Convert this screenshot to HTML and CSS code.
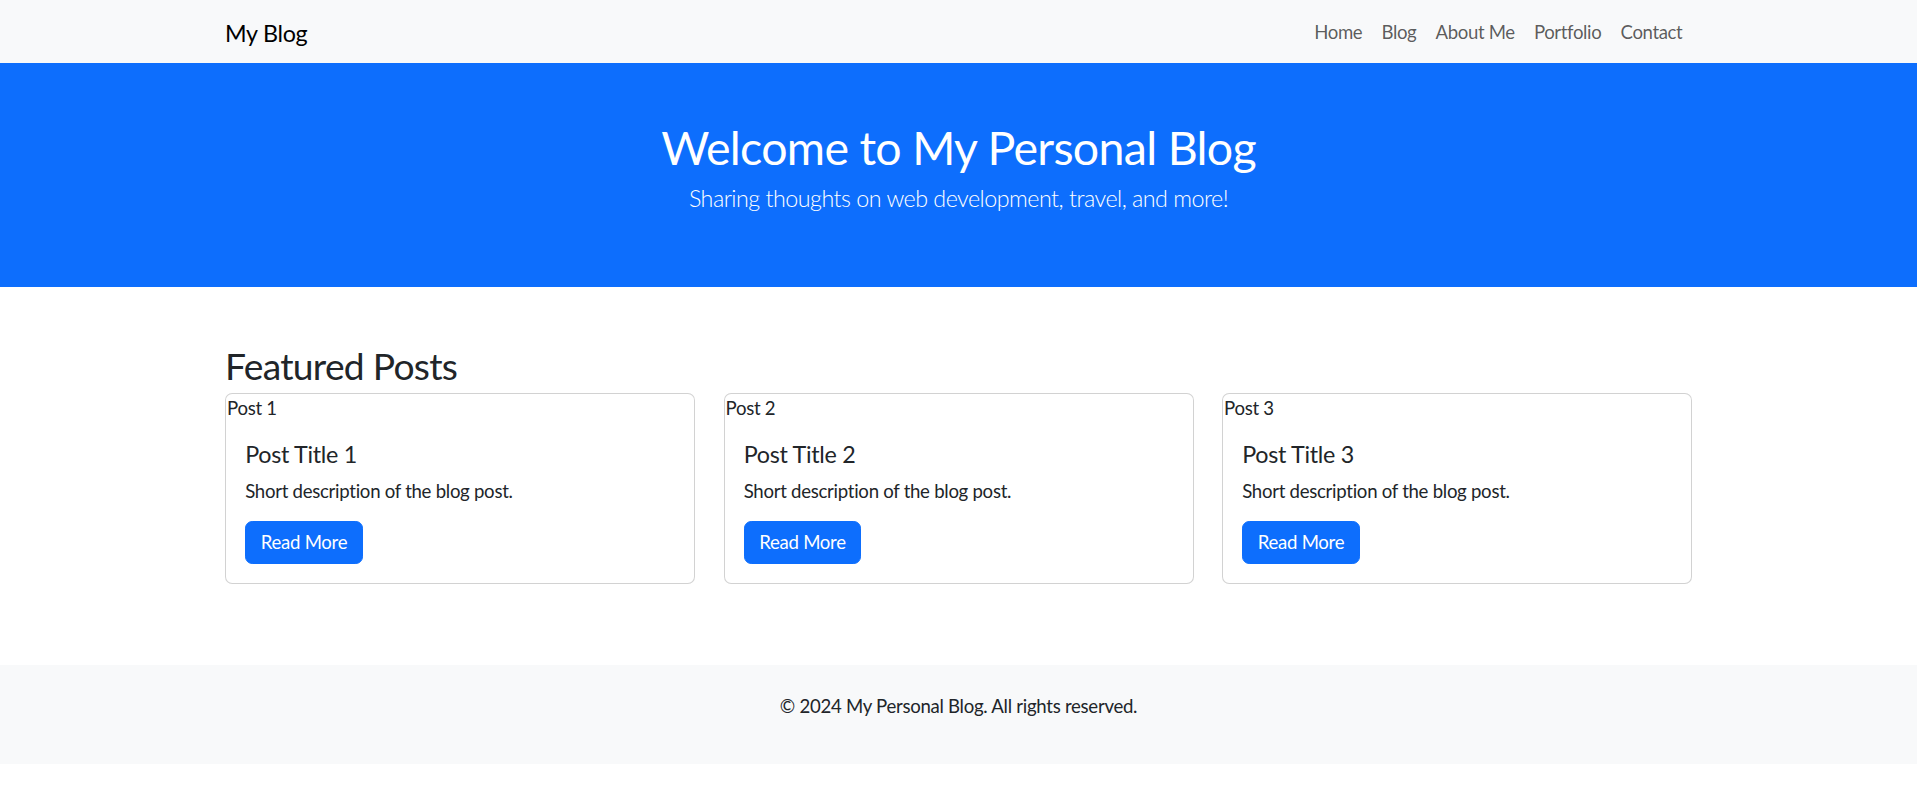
FILE: index.html
```html
<!DOCTYPE html>
<html lang="en">
<head>
<meta charset="utf-8">
<title>My Personal Blog</title>
<link rel="stylesheet" href="styles.css">
</head>
<body>
<nav class="navbar">
  <div class="container nav-inner">
    <a class="brand" href="#">My Blog</a>
    <ul class="nav-links">
      <li><a href="#">Home</a></li>
      <li><a href="#">Blog</a></li>
      <li><a href="#">About Me</a></li>
      <li><a href="#">Portfolio</a></li>
      <li><a href="#">Contact</a></li>
    </ul>
  </div>
</nav>

<header class="hero">
  <h1 class="hero-title">Welcome to My Personal Blog</h1>
  <p class="hero-lead">Sharing thoughts on web development, travel, and more!</p>
</header>

<main class="posts">
  <div class="container">
    <h2 class="section-title">Featured Posts</h2>
    <div class="card-grid">
      <div class="card">
        <div class="card-img">Post 1</div>
        <div class="card-body">
          <h5 class="card-title">Post Title 1</h5>
          <p class="card-text">Short description of the blog post.</p>
          <a href="#" class="btn">Read More</a>
        </div>
      </div>
      <div class="card">
        <div class="card-img">Post 2</div>
        <div class="card-body">
          <h5 class="card-title">Post Title 2</h5>
          <p class="card-text">Short description of the blog post.</p>
          <a href="#" class="btn">Read More</a>
        </div>
      </div>
      <div class="card">
        <div class="card-img">Post 3</div>
        <div class="card-body">
          <h5 class="card-title">Post Title 3</h5>
          <p class="card-text">Short description of the blog post.</p>
          <a href="#" class="btn">Read More</a>
        </div>
      </div>
    </div>
  </div>
</main>

<footer class="footer">
  <p class="footer-text">&copy; 2024 My Personal Blog. All rights reserved.</p>
</footer>
</body>
</html>
```

FILE: styles.css
```css
* { box-sizing: border-box; }
html { font-size: 18.6px; }
body {
  margin: 0;
  font-family: Lato, "Open Sans", sans-serif;
  font-size: 18.6px;
  line-height: 1.5;
  letter-spacing: -0.015em;
  color: #212529;
  background: #fff;
}
a { text-decoration: none; }
h1, h2, h5, p { margin: 0; }

.container {
  width: 1467px;
  margin: 0 auto;
}

/* Navbar */
.navbar {
  background: #f8f9fa;
  height: 63px;
  padding-top: 2.5px;
  display: flex;
  align-items: center;
}
.nav-inner {
  display: flex;
  align-items: center;
  justify-content: space-between;
}
.brand {
  font-size: 23.3px;
  line-height: 36px;
  padding: 5px 0;
  color: #000;
}
.nav-links {
  list-style: none;
  margin: 0;
  padding: 0;
  display: flex;
}
.nav-links a {
  display: block;
  padding: 9.6px 9.6px;
  line-height: 28.8px;
  letter-spacing: -0.02em;
  color: rgba(0, 0, 0, 0.65);
}

/* Hero */
.hero {
  background: #0d6efd;
  color: #fff;
  text-align: center;
  padding: 55.5px 0 71.7px;
}
.hero-title {
  font-size: 46.5px;
  line-height: 57.6px;
  font-weight: 400;
  letter-spacing: -0.015em;
  margin-bottom: 3.6px;
}
.hero-lead {
  font-size: 23.3px;
  line-height: 36px;
  font-weight: 300;
  letter-spacing: -0.022em;
}

/* Posts */
.posts {
  padding: 55.4px 0 81px;
}
.section-title {
  font-size: 37.2px;
  line-height: 46px;
  font-weight: 400;
  letter-spacing: -0.019em;
  margin-bottom: 4.6px;
}
.card-grid {
  display: grid;
  grid-template-columns: repeat(3, 1fr);
  gap: 28.5px;
}
.card {
  border: 1px solid rgba(0, 0, 0, 0.175);
  border-radius: 7.2px;
  background: #fff;
}
.card-img {
  height: 26px;
  line-height: 28.6px;
  padding-left: 1px;
}
.card-body {
  padding: 19.2px;
}
.card-title {
  font-size: 23.3px;
  line-height: 28.8px;
  font-weight: 400;
  margin-bottom: 9px;
}
.card-text {
  line-height: 28.8px;
  margin-bottom: 14.7px;
}
.btn {
  display: inline-block;
  background: #0d6efd;
  border: 1px solid #0d6efd;
  color: #fff;
  border-radius: 7.2px;
  padding: 6.1px 14.6px;
  line-height: 28.8px;
}

/* Footer */
.footer {
  background: #f8f9fa;
  text-align: center;
  padding: 27.2px 0 23.8px;
}
.footer-text {
  line-height: 28.8px;
  margin-bottom: 19.2px;
}
```
